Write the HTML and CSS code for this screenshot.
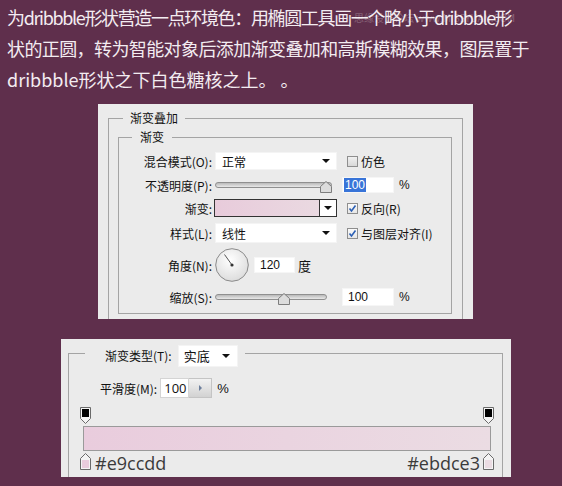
FILE: index.html
```html
<!DOCTYPE html>
<html lang="zh-CN">
<head>
    <meta charset="UTF-8">
    <title>渐变叠加</title>
    <link rel="stylesheet" href="styles.css">
</head>
<body>
    <p class="intro"><span class="line line-1">为dribbble形状营造一点环境色：用椭圆工具画一个略小于dribbble形</span><br><span class="line line-2">状的正圆，转为智能对象后添加渐变叠加和高斯模糊效果，图层置于</span><br>dribbble形状之下白色糖核之上。 。<span class="watermark">思缘设计论坛 www.MISSYUAN.COM</span></p>

    <!-- 图层样式：渐变叠加 -->
    <div class="dialog dialog-overlay">
        <fieldset class="group group-outer">
            <legend>渐变叠加</legend>
            <fieldset class="group group-inner">
                <legend>渐变</legend>
                <div class="rows">
                    <div class="row row-blend">
                        <span class="lbl">混合模式(O):</span>
                        <div class="select"><span>正常</span><i class="caret"></i></div>
                        <span class="check"><i class="box"></i>仿色</span>
                    </div>
                    <div class="row row-opacity">
                        <span class="lbl">不透明度(P):</span>
                        <div class="slider">
                            <div class="track">
                                <svg class="thumb thumb-max" width="12" height="12" viewBox="0 0 12 12"><path d="M6 .5 11.5 5.5V11.5H.5V5.5Z" fill="#dcdcdc" stroke="#7d7d7d"/></svg>
                            </div>
                        </div>
                        <span class="field field-num"><em class="sel">100</em></span>
                        <span class="unit">%</span>
                    </div>
                    <div class="row row-gradient">
                        <span class="lbl">渐变:</span>
                        <div class="swatch"><span class="swatch-fill"></span><span class="swatch-btn"><i class="caret"></i></span></div>
                        <span class="check"><i class="box on"><svg width="9" height="9" viewBox="0 0 9 9"><path d="M1.5 4.5 3.5 7 7.5 1.5" fill="none" stroke="#2b5fb4" stroke-width="1.6"/></svg></i>反向(R)</span>
                    </div>
                    <div class="row row-style">
                        <span class="lbl">样式(L):</span>
                        <div class="select select-tall"><span>线性</span><i class="caret"></i></div>
                        <span class="check"><i class="box on"><svg width="9" height="9" viewBox="0 0 9 9"><path d="M1.5 4.5 3.5 7 7.5 1.5" fill="none" stroke="#2b5fb4" stroke-width="1.6"/></svg></i>与图层对齐(I)</span>
                    </div>
                    <div class="row row-angle">
                        <span class="lbl">角度(N):</span>
                        <svg class="dial" width="34" height="34" viewBox="0 0 34 34">
                            <defs>
                                <radialGradient id="dialFill" cx="0.45" cy="0.35" r="0.7">
                                    <stop offset="0" stop-color="#ffffff"/>
                                    <stop offset="1" stop-color="#dadada"/>
                                </radialGradient>
                            </defs>
                            <circle cx="17" cy="17" r="16.3" fill="url(#dialFill)" stroke="#8a8a8a"/>
                            <path d="M17 17 9.5 6.5" stroke="#555" stroke-width="1"/>
                            <circle cx="17" cy="17" r="1.6" fill="#333"/>
                        </svg>
                        <span class="field field-angle">120</span>
                        <span class="unit unit-deg">度</span>
                    </div>
                    <div class="row row-scale">
                        <span class="lbl">缩放(S):</span>
                        <div class="slider">
                            <div class="track track-short">
                                <svg class="thumb thumb-mid" width="12" height="12" viewBox="0 0 12 12"><path d="M6 .5 11.5 5.5V11.5H.5V5.5Z" fill="#dcdcdc" stroke="#7d7d7d"/></svg>
                            </div>
                        </div>
                        <span class="field field-num field-scale">100</span>
                        <span class="unit">%</span>
                    </div>
                </div>
            </fieldset>
        </fieldset>
    </div>

    <!-- 渐变编辑器 -->
    <div class="dialog dialog-editor">
        <fieldset class="group group-editor">
            <legend>
                <span class="lbl-type">渐变类型(T):</span>
                <div class="select select-type"><span>实底</span><i class="caret"></i></div>
            </legend>
            <div class="smooth">
                <span>平滑度(M):</span>
                <span class="field field-smooth">100</span>
                <span class="spin"><i class="spin-arrow"></i></span>
                <span class="unit">%</span>
            </div>
            <div class="ramp">
                <div class="stops stops-top">
                    <svg width="11" height="17" viewBox="0 0 11 17"><path d="M.5 .5H10.5V11.5L5.5 16.5.5 11.5Z" fill="#f4f4f4" stroke="#6a6a6a"/><rect x="2" y="2" width="7" height="8" fill="#000"/></svg>
                    <svg width="11" height="17" viewBox="0 0 11 17"><path d="M.5 .5H10.5V11.5L5.5 16.5.5 11.5Z" fill="#f4f4f4" stroke="#6a6a6a"/><rect x="2" y="2" width="7" height="8" fill="#000"/></svg>
                </div>
                <div class="bar"></div>
                <div class="stops stops-bottom">
                    <svg width="11" height="17" viewBox="0 0 11 17"><path d="M5.5 .5 10.5 5.5V16.5H.5V5.5Z" fill="#f4f4f4" stroke="#6a6a6a"/><rect x="2" y="7" width="7" height="8" fill="#e9ccdd"/></svg>
                    <span class="hex">#e9ccdd</span>
                    <span class="spacer"></span>
                    <span class="hex hex-right">#ebdce3</span>
                    <svg width="11" height="17" viewBox="0 0 11 17"><path d="M5.5 .5 10.5 5.5V16.5H.5V5.5Z" fill="#f4f4f4" stroke="#6a6a6a"/><rect x="2" y="7" width="7" height="8" fill="#ebdce3"/></svg>
                </div>
            </div>
        </fieldset>
    </div>
</body>
</html>
```

FILE: styles.css
```css
* {
    box-sizing: border-box;
}

body {
    margin: 0;
    height: 486px;
    overflow: hidden;
    background-color: #5f2f4c;
    font-family: "Noto Sans CJK SC", sans-serif;
}

/* 顶部说明文字 */
.intro {
    position: relative;
    margin: 0;
    padding: 2px 0 0 7px;
    color: #f3ecf1;
    font-size: 18px;
    line-height: 31px;
    white-space: nowrap;
}

.line-1 {
    letter-spacing: -1.35px;
}

.line-2 {
    letter-spacing: -0.6px;
}

.watermark {
    position: absolute;
    left: 354px;
    top: 11px;
    font-size: 10px;
    line-height: 14px;
    color: rgba(255, 255, 255, 0.25);
}

/* 对话框通用 */
.dialog {
    background-color: #ebebeb;
    overflow: hidden;
    font-size: 12px;
    color: #111;
}

.group {
    margin: 0;
    padding: 0;
    min-width: 0;
    border: 1px solid #a4a4a4;
}

.group legend {
    padding: 0;
    font-size: 12px;
    line-height: 16px;
}

/* 渐变叠加 */
.dialog-overlay {
    width: 375px;
    height: 215px;
    margin: 9px 0 0 98px;
    padding: 6px 10px 0;
}

.group-outer {
    height: 300px;
}

.group-outer > legend {
    margin-left: 14px;
    padding: 0 7px;
}

.group-inner {
    margin: 3px 10px 0 9px;
}

.group-inner > legend {
    margin-left: 13px;
    padding: 0 8px;
}

.rows {
    padding: 5px 0 1px;
}

.row {
    display: flex;
    align-items: center;
}

.row-blend { height: 22px; }
.row-opacity { height: 26px; }
.row-gradient { height: 20px; }
.row-style { height: 30px; }
.row-angle { height: 34px; }
.row-scale { height: 30px; }

.lbl {
    flex: none;
    width: 93px;
    text-align: right;
}

.select {
    display: flex;
    align-items: center;
    justify-content: space-between;
    width: 122px;
    height: 18px;
    margin-left: 3px;
    padding: 0 6px 0 6px;
    background-color: #fff;
    border: 1px solid #f4f4f4;
}

.select-tall {
    height: 20px;
}

.caret {
    width: 0;
    height: 0;
    border-left: 4px solid transparent;
    border-right: 4px solid transparent;
    border-top: 4px solid #111;
}

.check {
    display: flex;
    align-items: center;
    margin-left: 10px;
    gap: 3px;
}

.box {
    display: flex;
    align-items: center;
    justify-content: center;
    width: 11px;
    height: 11px;
    border: 1px solid #8e8e8e;
    background: linear-gradient(#f0f0f0, #d8d8d8);
}

.box.on {
    background: linear-gradient(#fafafa, #e6e6e6);
}

.slider {
    flex: none;
    width: 122px;
}

.track {
    position: relative;
    width: 117px;
    height: 6px;
    margin-left: 3px;
    border: 1px solid #8f8f8f;
    border-radius: 3px;
    background: linear-gradient(#b9b9b9, #e8e8e8);
}

.track-short {
    width: 112px;
}

.thumb {
    position: absolute;
    top: -2px;
}

.thumb-max {
    left: 104px;
}

.thumb-mid {
    left: 62px;
}

.field {
    display: flex;
    align-items: center;
    height: 16px;
    background-color: #fff;
    border: 1px solid #f6f6f6;
    font-family: "Liberation Sans", "Noto Sans CJK SC", sans-serif;
    font-size: 12px;
}

.field-num {
    width: 52px;
    margin-left: 8px;
    padding-left: 1px;
}

.field-scale {
    height: 18px;
    padding-left: 5px;
}

.sel {
    font-style: normal;
    background-color: #3874d8;
    color: #fff;
    padding: 0 1px;
    line-height: 14px;
}

.unit {
    margin-left: 5px;
    font-family: "Liberation Sans", sans-serif;
}

.swatch {
    display: flex;
    width: 123px;
    height: 18px;
    margin-left: 2px;
    border: 1px solid #333;
}

.swatch-fill {
    flex: 1;
    background: linear-gradient(to right, #e8cbdb, #ead9e1);
}

.swatch-btn {
    display: flex;
    align-items: center;
    justify-content: center;
    width: 17px;
    background-color: #fff;
    border-left: 1px solid #333;
}

.dial {
    margin-left: 3px;
}

.field-angle {
    width: 41px;
    height: 16px;
    margin-left: 5px;
    padding-left: 5px;
}

.unit-deg {
    margin-left: 3px;
    font-family: "Noto Sans CJK SC", sans-serif;
    font-size: 13px;
}

/* 渐变编辑器 */
.dialog-editor {
    width: 450px;
    height: 138px;
    margin: 20px 0 0 61px;
    padding: 0 8px 0 7px;
}

.group-editor {
    height: 220px;
}

.group-editor > legend {
    display: flex;
    align-items: center;
    height: 28px;
    margin-left: 16px;
    padding: 6px 7px 0 20px;
}

.select-type {
    width: 60px;
    height: 22px;
    margin-left: 6px;
    padding: 0 7px 0 5px;
    font-size: 13px;
}

.smooth {
    display: flex;
    align-items: center;
    height: 22px;
    margin: 10px 0 0 31px;
}

.field-smooth {
    width: 29px;
    height: 20px;
    margin-left: 3px;
    padding-left: 3px;
    font-family: "Open Sans", sans-serif;
    font-size: 13px;
    border-color: #d4d4d4;
}

.spin {
    display: flex;
    align-items: center;
    justify-content: center;
    width: 23px;
    height: 20px;
    border: 1px solid #c4c4c4;
    border-left: none;
    background: linear-gradient(#f2f2f2, #d2d2d2);
}

.spin-arrow {
    width: 0;
    height: 0;
    border-top: 3px solid transparent;
    border-bottom: 3px solid transparent;
    border-left: 3px solid #6d7f9c;
}

.smooth .unit {
    margin-left: 5px;
    font-size: 13px;
}

.ramp {
    width: 414px;
    margin: 8px 0 0 11px;
}

.stops {
    display: flex;
    justify-content: space-between;
    height: 17px;
}

.bar {
    height: 25px;
    margin: 2px 3px 0;
    border: 1px solid #9a9a9a;
    background: linear-gradient(to right, #e9ccdd, #ebdce3);
}

.stops-bottom {
    align-items: flex-start;
    margin-top: 2px;
}

.hex {
    margin-left: 4px;
    font-family: "Open Sans", sans-serif;
    font-size: 18px;
    line-height: 20px;
    color: #3b3b3b;
}

.hex-right {
    margin: 0 3px 0 0;
}

.spacer {
    flex: 1;
}
```
